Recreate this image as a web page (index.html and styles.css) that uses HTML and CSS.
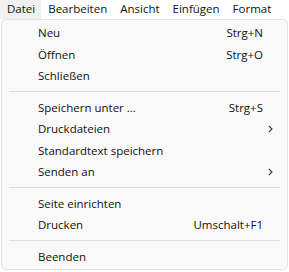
FILE: index.html
```html
<!DOCTYPE html>
<html lang="de">
<head>
  <meta charset="UTF-8">
  <title>Datei-Menü</title>
  <link rel="stylesheet" href="styles.css">
</head>
<body>

  <!-- Menu bar -->
  <div class="menubar">
    <span class="top-item open">Datei</span>
    <span class="top-item">Bearbeiten</span>
    <span class="top-item">Ansicht</span>
    <span class="top-item">Einfügen</span>
    <span class="top-item">Format</span>
  </div>

  <!-- Datei dropdown -->
  <div class="dropdown">
    <div class="row"><span class="label">Neu</span><span class="key">Strg+N</span></div>
    <div class="row"><span class="label">Öffnen</span><span class="key">Strg+O</span></div>
    <div class="row"><span class="label">Schließen</span></div>
    <div class="sep"></div>
    <div class="row"><span class="label">Speichern unter ...</span><span class="key">Strg+S</span></div>
    <div class="row"><span class="label">Druckdateien</span><svg class="chev" width="5" height="8" viewBox="0 0 5 8"><path d="M0.8 0.8 L4 4 L0.8 7.2" fill="none" stroke="#333" stroke-width="1.1"/></svg></div>
    <div class="row"><span class="label">Standardtext speichern</span></div>
    <div class="row"><span class="label">Senden an</span><svg class="chev" width="5" height="8" viewBox="0 0 5 8"><path d="M0.8 0.8 L4 4 L0.8 7.2" fill="none" stroke="#333" stroke-width="1.1"/></svg></div>
    <div class="sep"></div>
    <div class="row"><span class="label">Seite einrichten</span></div>
    <div class="row"><span class="label">Drucken</span><span class="key">Umschalt+F1</span></div>
    <div class="sep"></div>
    <div class="row"><span class="label">Beenden</span></div>
  </div>

</body>
</html>
```

FILE: styles.css
```css
body { margin: 0; background: #fff; color: #111; font-family: "Segoe UI", "Open Sans", sans-serif; font-size: 11.5px; }
.menubar { display: flex; height: 19px; align-items: center; }
.top-item { padding: 0 6px 0 7px; height: 19px; line-height: 18px; }
.top-item.open { background: #f0f0f0; }
.dropdown { margin-left: 1px; width: 285px; background: #f9f9f9; border: 1px solid #e3e3e3; border-radius: 5px; padding: 2px 0; }
.row { display: flex; align-items: center; height: 21.5px; padding: 0 14px 0 36px; }
.label { flex: 1; }
.key { margin-right: 10px; }
.chev { display: block; }
.sep { height: 1px; background: #dcdcdc; margin: 4.5px 7px; }
```
